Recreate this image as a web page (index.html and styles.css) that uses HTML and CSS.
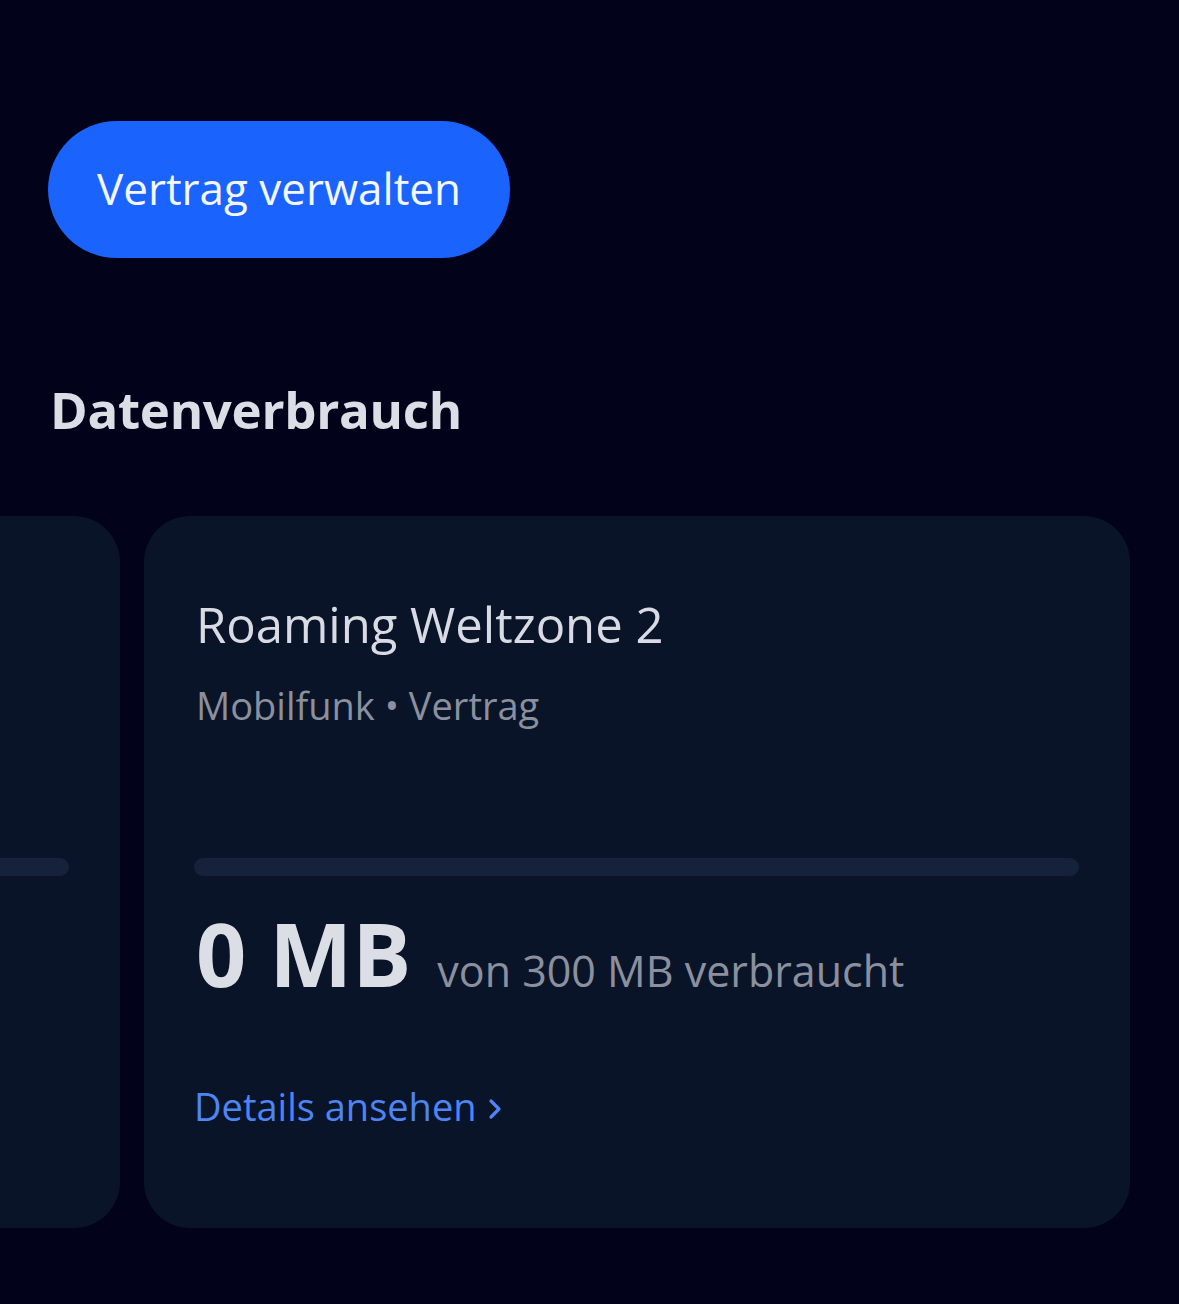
FILE: index.html
```html
<!DOCTYPE html>
<html lang="de">
<head>
<meta charset="utf-8">
<link rel="stylesheet" href="styles.css">
</head>
<body>
<main class="page">
  <div class="actions">
    <button class="btn-primary">Vertrag verwalten</button>
  </div>
  <h2 class="section-title">Datenverbrauch</h2>
  <div class="carousel">
    <div class="cards">
      <section class="card card-peek">
        <div class="bar bar-peek"><div class="bar-fill"></div></div>
      </section>
      <section class="card">
        <h3 class="card-title">Roaming Weltzone 2</h3>
        <p class="card-sub">Mobilfunk • Vertrag</p>
        <div class="bar"><div class="bar-fill"></div></div>
        <div class="usage"><span class="usage-big">0 MB</span><span class="usage-small">von 300 MB verbraucht</span></div>
        <a class="details">Details ansehen <svg class="chev" width="16" height="26" viewBox="0 0 16 26"><path d="M4 5 L12 13 L4 21" fill="none" stroke="currentColor" stroke-width="3.2" stroke-linecap="round" stroke-linejoin="round"/></svg></a>
      </section>
    </div>
  </div>
</main>
</body>
</html>
```
FILE: styles.css
```css
html, body {
  margin: 0;
  padding: 0;
  background: #02031a;
}
body {
  font-family: "Open Sans", "Noto Sans", sans-serif;
  width: 1179px;
  height: 1304px;
  overflow: hidden;
}
.page {
  padding: 121px 0 0 0;
}
.actions {
  padding-left: 48px;
}
.btn-primary {
  display: inline-flex;
  align-items: center;
  justify-content: center;
  width: 462px;
  height: 137px;
  border: none;
  border-radius: 69px;
  background: #1a63fd;
  color: #f4f7ff;
  font-family: inherit;
  font-size: 44px;
  font-weight: 500;
  padding: 0 0 4px 0;
}
.section-title {
  margin: 116px 0 0 50px;
  color: #dcdee6;
  font-size: 51px;
  font-weight: 700;
  line-height: 70px;
  letter-spacing: -0.3px;
}
.carousel {
  margin-top: 72px;
  overflow: hidden;
}
.cards {
  display: flex;
  gap: 24px;
  margin-left: -866px;
}
.card {
  flex: 0 0 986px;
  height: 712px;
  box-sizing: border-box;
  background: #0a1429;
  border-radius: 46px;
  padding: 75px 51px 0 52px;
  display: flex;
  flex-direction: column;
}
.card-peek {
  justify-content: flex-start;
  padding-top: 342px;
}
.card-title {
  margin: 0;
  color: #d8dbe3;
  font-size: 49px;
  font-weight: 500;
  line-height: 66px;
}
.card-sub {
  margin: 22px 0 0 0;
  color: #8b909e;
  font-size: 38px;
  line-height: 52px;
}
.bar {
  margin-top: 127px;
  height: 18px;
  border-radius: 9px;
  background: #16223c;
  margin-left: -2px;
}
.bar-peek {
  margin-top: 0;
}
.usage {
  display: flex;
  align-items: baseline;
  gap: 26px;
  margin-top: 21px;
}
.usage-big {
  color: #dcdee5;
  font-size: 88px;
  font-weight: 700;
  line-height: 112px;
}
.usage-small {
  color: #8b909e;
  font-size: 43px;
}
.details {
  margin-top: 71px;
  margin-left: -2px;
  color: #4d86f4;
  font-size: 38px;
  font-weight: 500;
  display: inline-flex;
  align-items: center;
  gap: 10px;
}
.chev {
  margin-top: 6px;
}
```
